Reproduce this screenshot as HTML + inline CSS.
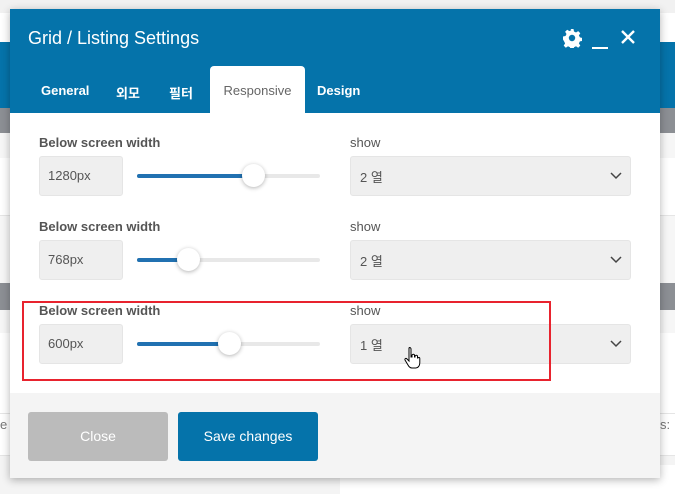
<!DOCTYPE html>
<html><head><meta charset="utf-8"><style>
*{box-sizing:border-box;margin:0;padding:0}
body{width:675px;height:494px;overflow:hidden;position:relative;background:#fff;font-family:"Segoe UI","Liberation Sans","Noto Sans CJK KR",sans-serif;}
.b{position:absolute;left:0;width:675px}
.modal{position:absolute;left:10px;top:9px;width:650px;height:469px;background:#fff;box-shadow:0 2px 8px rgba(0,0,0,.3)}
.hd{position:absolute;left:0;top:0;width:650px;height:104px;background:#0573aa}
.title{position:absolute;left:18px;top:19px;color:#fff;font-size:18px;font-weight:300}
.tab{position:absolute;top:74px;color:#fff;font-size:13px;font-weight:600}
.tab.act{top:57px;left:200px;width:95px;height:47px;background:#fff;border-radius:4px 4px 0 0;color:#666;font-weight:400;text-align:center;line-height:49px}
.lbl{position:absolute;font-size:13px;font-weight:600;color:#555}
.lbl2{position:absolute;font-size:13px;color:#555}
.inp{position:absolute;left:29px;width:84px;height:40px;background:#efefef;border:1px solid #e5e5e5;border-radius:3px;font-size:13px;color:#555;padding:11px 0 0 8px}
.tr{position:absolute;left:127px;width:183px;height:4px;background:#e8e8e8;border-radius:2px}
.fill{position:absolute;left:0;top:0;height:4px;background:#2171b1;border-radius:2px}
.th{position:absolute;top:-10px;width:23px;height:23px;border-radius:50%;background:#fff;box-shadow:0 1px 4px rgba(0,0,0,.3)}
.sel{position:absolute;left:340px;width:281px;height:40px;background:#efefef;border:1px solid #e5e5e5;border-radius:3px;font-size:13px;color:#555;padding:10px 0 0 9px}
.sel svg{position:absolute;right:8px;top:15px}
.ft{position:absolute;left:0;top:384px;width:650px;height:85px;background:#f4f4f4}
.btn{position:absolute;top:19px;width:140px;height:49px;border-radius:3px;color:#fff;font-size:14px;text-align:center;line-height:48px}
</style></head><body>
<div class="b" style="top:0;height:13px;background:#f1f1f1"></div>
<div class="b" style="top:42px;height:66px;background:#0573aa"></div>
<div class="b" style="top:108px;height:25px;background:#8c8f94"></div>
<div class="b" style="top:133px;height:25px;background:#f6f6f6"></div>
<div class="b" style="top:215px;height:68px;background:#f6f6f6;border-top:1px solid #e5e5e5"></div>
<div class="b" style="top:283px;height:27px;background:#8c8f94"></div>
<div class="b" style="top:310px;height:23px;background:#f6f6f6"></div>
<div class="b" style="top:413px;height:1px;background:#e5e5e5"></div>
<div class="b" style="top:455px;height:39px;background:#f4f4f4;border-top:1px solid #e5e5e5"></div>
<div style="position:absolute;left:340px;top:465px;width:335px;height:29px;background:#fff"></div>
<div style="position:absolute;left:0;top:417px;font-size:13px;color:#777">e</div>
<div style="position:absolute;left:660px;top:417px;font-size:13px;color:#777">s:</div>
<div class="modal">
 <div class="hd">
  <div class="title">Grid / Listing Settings</div>
  <svg style="position:absolute;left:552px;top:19px" width="20" height="20" viewBox="0 0 20 20"><path fill="#fff" d="M8.5 1h3l.5 2.5 2 1 2.2-1.4 2.1 2.1-1.4 2.2 1 2 2.5.5v3l-2.5.5-1 2 1.4 2.2-2.1 2.1-2.2-1.4-2 1-.5 2.5h-3l-.5-2.5-2-1-2.2 1.4-2.1-2.1 1.4-2.2-1-2L1 11.5v-3l2.5-.5 1-2-1.4-2.2 2.1-2.1 2.2 1.4 2-1z"/><circle cx="10" cy="10" r="3.2" fill="#0573aa"/></svg>
  <div style="position:absolute;left:582px;top:38px;width:16px;height:2px;background:#fff"></div>
  <svg style="position:absolute;left:610px;top:20px" width="16" height="16" viewBox="0 0 16 16"><path d="M2 2L14 14M14 2L2 14" stroke="#fff" stroke-width="2.4"/></svg>
  <div class="tab" style="left:31px">General</div>
  <div class="tab" style="left:106px">외모</div>
  <div class="tab" style="left:159px">필터</div>
  <div class="tab act">Responsive</div>
  <div class="tab" style="left:307px">Design</div>
 </div>
 <div class="lbl" style="left:29px;top:126px">Below screen width</div>
 <div class="lbl2" style="left:340px;top:126px">show</div>
 <div class="inp" style="top:147px">1280px</div>
 <div class="tr" style="top:165px"><div class="fill" style="width:116px"></div><div class="th" style="left:105px"></div></div>
 <div class="sel" style="top:147px">2 열<svg width="12" height="8"><path d="M1 1l5 5 5-5" stroke="#444" stroke-width="1.5" fill="none"/></svg></div>
 <div class="lbl" style="left:29px;top:210px">Below screen width</div>
 <div class="lbl2" style="left:340px;top:210px">show</div>
 <div class="inp" style="top:231px">768px</div>
 <div class="tr" style="top:249px"><div class="fill" style="width:50px"></div><div class="th" style="left:40px"></div></div>
 <div class="sel" style="top:231px">2 열<svg width="12" height="8"><path d="M1 1l5 5 5-5" stroke="#444" stroke-width="1.5" fill="none"/></svg></div>
 <div class="lbl" style="left:29px;top:294px">Below screen width</div>
 <div class="lbl2" style="left:340px;top:294px">show</div>
 <div class="inp" style="top:315px">600px</div>
 <div class="tr" style="top:333px"><div class="fill" style="width:92px"></div><div class="th" style="left:81px"></div></div>
 <div class="sel" style="top:315px">1 열<svg width="12" height="8"><path d="M1 1l5 5 5-5" stroke="#444" stroke-width="1.5" fill="none"/></svg></div>
 <svg style="position:absolute;left:393px;top:337px" width="20" height="24" viewBox="0 0 20 24"><path d="M6 2c1-1 2 0 2 1v8h1V9c1-1 2-1 2.5 0v2h.5v-1c1-1 2-1 2.5 0v2h.3c1-1 2-.5 2 .5V17c0 3-2 5-4 5H9c-2 0-3-1-4-3L2 14c-.5-1 .5-2 1.5-1.5L6 15z" fill="#fff" stroke="#000" stroke-width="1"/></svg>
 <div style="position:absolute;left:12px;top:292px;width:529px;height:80px;border:2px solid #e8232e"></div>
 <div class="ft">
  <div class="btn" style="left:18px;background:#bbb">Close</div>
  <div class="btn" style="left:168px;background:#0573aa">Save changes</div>
 </div>
</div>
</body></html>
